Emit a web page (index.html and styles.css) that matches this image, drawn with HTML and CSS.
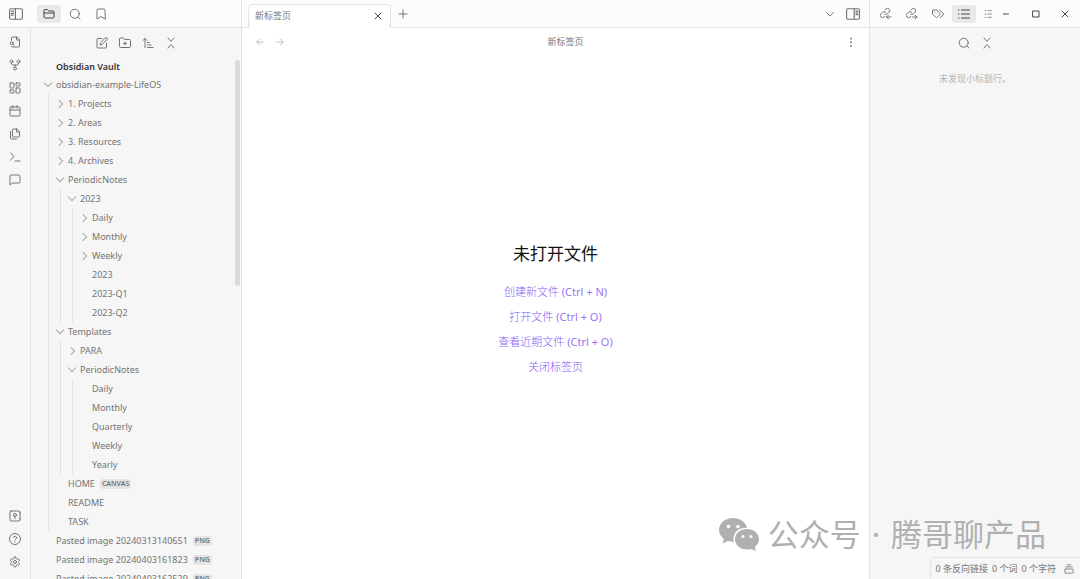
FILE: index.html
```html
<!DOCTYPE html>
<html lang="zh-CN">
<head>
  <meta charset="UTF-8" />
  <meta name="viewport" content="width=device-width, initial-scale=1.0"/>
  <title>新标签页 - Obsidian Vault</title>
  <link rel="stylesheet" href="styles.css">
</head>
<body>

<!-- Icons -->
<svg class="sprite" aria-hidden="true">
  <symbol id="i-side-left" viewBox="0 0 24 24"><rect x="1" y="3" width="22" height="18" rx="2"/><path d="M11 3v18M4 7h4M4 11h4M4 14h3"/></symbol>
  <symbol id="i-side-right" viewBox="0 0 24 24"><rect x="1" y="3" width="22" height="18" rx="2"/><path d="M14 3v18M17 7h3M17 10h3M17 13h3"/></symbol>
  <symbol id="i-folder" viewBox="0 0 24 24"><path d="M20 20a2 2 0 0 0 2-2V8a2 2 0 0 0-2-2h-7.9a2 2 0 0 1-1.7-.9l-.8-1.2A2 2 0 0 0 7.9 3H4a2 2 0 0 0-2 2v13a2 2 0 0 0 2 2ZM2 10h20"/></symbol>
  <symbol id="i-search" viewBox="0 0 24 24"><circle cx="11.5" cy="11.5" r="9"/><path d="m22 22-4-4"/></symbol>
  <symbol id="i-bookmark" viewBox="0 0 24 24"><path d="m20 22-8-5-8 5V4a2 2 0 0 1 2-2h12a2 2 0 0 1 2 2z"/></symbol>
  <symbol id="i-file-search" viewBox="0 0 24 24"><path d="M5 21c.3.6 1 1 1.700 1H19a2 2 0 0 0 2-2V7l-5-5H7a2 2 0 0 0-2 2v4M15 2v6h6M10 19l-2-2"/><circle cx="5.500" cy="14.500" r="3"/></symbol>
  <symbol id="i-fork" viewBox="0 0 24 24"><circle cx="12" cy="19" r="3"/><circle cx="5" cy="5" r="3"/><circle cx="19" cy="5" r="3"/><path d="M19 8v1c0 1.500-1 3-3 3H8c-2 0-3-1.500-3-3V8M12 12v4"/></symbol>
  <symbol id="i-dashboard" viewBox="0 0 24 24"><rect x="2" y="2" width="8" height="10" rx="1"/><rect x="14" y="2" width="8" height="6" rx="1"/><rect x="14" y="12" width="8" height="10" rx="1"/><rect x="2" y="16" width="8" height="6" rx="1"/></symbol>
  <symbol id="i-calendar" viewBox="0 0 24 24"><rect x="2" y="4" width="20" height="18" rx="2"/><path d="M16 1v5M8 1v5M2 10h20"/></symbol>
  <symbol id="i-files" viewBox="0 0 24 24"><path d="M15.500 2H9a2 2 0 0 0-2 2v12a2 2 0 0 0 2 2h10a2 2 0 0 0 2-2V7.500zM3 7v13a2 2 0 0 0 2 2h10M15 2v6h6"/></symbol>
  <symbol id="i-terminal" viewBox="0 0 24 24"><path d="m3 18 7-7-7-7M12 20h10"/></symbol>
  <symbol id="i-message" viewBox="0 0 24 24"><path d="M22 16a2 2 0 0 1-2 2H7l-5 4V4a2 2 0 0 1 2-2h16a2 2 0 0 1 2 2z"/></symbol>
  <symbol id="i-vault" viewBox="0 0 24 24"><rect x="2" y="2" width="20" height="20" rx="2"/><circle cx="12" cy="10" r="3"/><path d="M12 13v4M22 6h1M22 18h1"/></symbol>
  <symbol id="i-help" viewBox="0 0 24 24"><circle cx="12" cy="12" r="11"/><path d="M9 9a3 3 0 0 1 6 1c0 2-3 2.500-3 4M12 17.500v.5"/></symbol>
  <symbol id="i-gear" viewBox="0 0 24 24"><path d="M12.220 2h-.44a2 2 0 0 0-2 2v.18a2 2 0 0 1-1 1.730l-.43.25a2 2 0 0 1-2 0l-.15-.08a2 2 0 0 0-2.730.73l-.22.38a2 2 0 0 0 .73 2.730l.15.1a2 2 0 0 1 1 1.720v.51a2 2 0 0 1-1 1.740l-.15.09a2 2 0 0 0-.73 2.730l.22.38a2 2 0 0 0 2.730.73l.15-.08a2 2 0 0 1 2 0l.43.25a2 2 0 0 1 1 1.730V20a2 2 0 0 0 2 2h.44a2 2 0 0 0 2-2v-.18a2 2 0 0 1 1-1.730l.43-.25a2 2 0 0 1 2 0l.15.08a2 2 0 0 0 2.730-.73l.22-.39a2 2 0 0 0-.73-2.730l-.15-.08a2 2 0 0 1-1-1.740v-.5a2 2 0 0 1 1-1.740l.15-.09a2 2 0 0 0 .73-2.730l-.22-.38a2 2 0 0 0-2.730-.73l-.15.08a2 2 0 0 1-2 0l-.43-.25a2 2 0 0 1-1-1.730V4a2 2 0 0 0-2-2z"/><circle cx="12" cy="12" r="3"/></symbol>
  <symbol id="i-edit" viewBox="0 0 24 24"><path d="M12 3H4a2 2 0 0 0-2 2v15a2 2 0 0 0 2 2h15a2 2 0 0 0 2-2v-8M18.500 2a2.100 2.100 0 0 1 3.500 3.500L12 15l-4 1 1-4Z"/></symbol>
  <symbol id="i-folder-plus" viewBox="0 0 24 24"><path d="M21 21a2 2 0 0 0 2-2V7a2 2 0 0 0-2-2h-9L9.600 2.900A2 2 0 0 0 8 2H3a2 2 0 0 0-2 2v15a2 2 0 0 0 2 2ZM12 10v6M9 13h6"/></symbol>
  <symbol id="i-sort" viewBox="0 0 24 24"><path d="m2 7 4-4 4 4M6 3v18M11 11h4M11 16h7M11 21h11"/></symbol>
  <symbol id="i-collapse" viewBox="0 0 24 24"><path d="m6 22 6-7 6 7M6 2l6 7 6-7"/></symbol>
  <symbol id="i-link-in" viewBox="0 0 24 24"><path d="M8 11a4.500 4.500 0 0 0 7 .5l3-3A4.500 4.500 0 0 0 11.700 2L10 3.700M12 9a4.500 4.500 0 0 0-7-.5l-3 3A4.500 4.500 0 0 0 8.300 18l1.200-1.200M22 18h-9M17 14l-4 4 4 4"/></symbol>
  <symbol id="i-link-out" viewBox="0 0 24 24"><path d="M8 11a4.500 4.500 0 0 0 7 .5l3-3A4.500 4.500 0 0 0 11.700 2L10 3.700M12 9a4.500 4.500 0 0 0-7-.5l-3 3A4.500 4.500 0 0 0 8.300 18l1.200-1.200M13 18h9M18 14l4 4-4 4"/></symbol>
  <symbol id="i-tags" viewBox="0 0 24 24"><path d="M9 4H1v8l6.300 6.300c1 1 2.500 1 3.400 0l4.600-4.600c1-1 1-2.500 0-3.400ZM5.500 8.500v.1M15 4l7.300 6.300a2.400 2.400 0 0 1 0 3.400L17 19"/></symbol>
  <symbol id="i-list" viewBox="0 0 24 24"><path d="M7 4h16M7 12h16M7 20h16M1 4h1M1 12h1M1 20h1"/></symbol>
  <symbol id="i-outline" viewBox="0 0 24 24"><path d="M12 4h8M12 12h8M12 20h8M5 4h2M5 12h2M5 20h2"/></symbol>
  <symbol id="i-chevron-down" viewBox="0 0 24 24"><path d="m5 9 7 7 7-7"/></symbol>
  <symbol id="i-close" viewBox="0 0 24 24"><path d="M6 6l12 12M18 6 6 18"/></symbol>
  <symbol id="i-plus" viewBox="0 0 24 24"><path d="M12 4v16M4 12h16"/></symbol>
  <symbol id="i-back" viewBox="0 0 24 24"><path d="M20 12H4M11 5l-7 7 7 7"/></symbol>
  <symbol id="i-forward" viewBox="0 0 24 24"><path d="M4 12h16M13 5l7 7-7 7"/></symbol>
  <symbol id="i-more" viewBox="0 0 24 24"><path d="M12 3v1M12 12v1M12 21v1"/></symbol>
  <symbol id="i-min" viewBox="0 0 24 24"><path d="M7 12h10"/></symbol>
  <symbol id="i-max" viewBox="0 0 24 24"><rect x="6" y="6" width="12" height="12"/></symbol>
  <symbol id="i-stack" viewBox="0 0 24 24"><path d="M8 2h8M4 7h16"/><rect x="2" y="12" width="20" height="10" rx="2"/></symbol>
  <symbol id="i-wechat" viewBox="0 0 42 34">
    <path d="M15 1C7 1 1 6.500 1 13c0 3.500 2 6.500 5 9l-1.500 4.500L10 24c2 .6 4 .9 6 .8-2.500-8 4-14.300 13-14C27.500 5 22 1 15 1Z"/>
    <path d="M29 12c-7 0-12 4.700-12 10.300S22 32.500 29 32.500c1.500 0 3-.2 4.300-.6L38 34l-1.200-4c2.700-2 4.200-4.700 4.200-7.700C41 16.700 36 12 29 12Z"/>
    <g class="eyes"><circle cx="10.500" cy="9.500" r="1.800"/><circle cx="20" cy="9.500" r="1.800"/><circle cx="25" cy="19.500" r="1.500"/><circle cx="33" cy="19.500" r="1.500"/></g>
  </symbol>
</svg>

<div class="app">

  <!-- Left sidebar -->
  <div class="left">
    <div class="titlebar">
      <button class="toggle" aria-label="折叠侧边栏"><svg class="icon wide"><use href="#i-side-left"/></svg></button>
      <button class="tab-icon active" aria-label="文件列表"><svg class="icon"><use href="#i-folder"/></svg></button>
      <button class="tab-icon" aria-label="搜索"><svg class="icon"><use href="#i-search"/></svg></button>
      <button class="tab-icon" aria-label="书签"><svg class="icon"><use href="#i-bookmark"/></svg></button>
    </div>
    <div class="left-body">
      <nav class="ribbon">
        <button aria-label="快速切换"><svg class="icon"><use href="#i-file-search"/></svg></button>
        <button aria-label="关系图谱"><svg class="icon"><use href="#i-fork"/></svg></button>
        <button aria-label="新建白板"><svg class="icon"><use href="#i-dashboard"/></svg></button>
        <button aria-label="日记"><svg class="icon"><use href="#i-calendar"/></svg></button>
        <button aria-label="插入模板"><svg class="icon"><use href="#i-files"/></svg></button>
        <button aria-label="命令面板"><svg class="icon"><use href="#i-terminal"/></svg></button>
        <button aria-label="消息"><svg class="icon"><use href="#i-message"/></svg></button>
        <div class="spacer"></div>
        <button aria-label="打开其他仓库"><svg class="icon"><use href="#i-vault"/></svg></button>
        <button aria-label="帮助"><svg class="icon"><use href="#i-help"/></svg></button>
        <button aria-label="设置"><svg class="icon"><use href="#i-gear"/></svg></button>
      </nav>

      <div class="explorer">
        <div class="pane-actions">
          <button aria-label="新建笔记"><svg class="icon"><use href="#i-edit"/></svg></button>
          <button aria-label="新建文件夹"><svg class="icon"><use href="#i-folder-plus"/></svg></button>
          <button aria-label="排序"><svg class="icon"><use href="#i-sort"/></svg></button>
          <button aria-label="全部折叠"><svg class="icon"><use href="#i-collapse"/></svg></button>
        </div>
        <div class="files">
          <div class="vault-name">Obsidian Vault</div>
          <ul class="tree">
            <li><button class="row folder open">obsidian-example-LifeOS</button>
              <ul>
                <li><button class="row folder">1. Projects</button></li>
                <li><button class="row folder">2. Areas</button></li>
                <li><button class="row folder">3. Resources</button></li>
                <li><button class="row folder">4. Archives</button></li>
                <li><button class="row folder open">PeriodicNotes</button>
                  <ul>
                    <li><button class="row folder open">2023</button>
                      <ul>
                        <li><button class="row folder">Daily</button></li>
                        <li><button class="row folder">Monthly</button></li>
                        <li><button class="row folder">Weekly</button></li>
                        <li><button class="row">2023</button></li>
                        <li><button class="row">2023-Q1</button></li>
                        <li><button class="row">2023-Q2</button></li>
                      </ul>
                    </li>
                  </ul>
                </li>
                <li><button class="row folder open">Templates</button>
                  <ul>
                    <li><button class="row folder">PARA</button></li>
                    <li><button class="row folder open">PeriodicNotes</button>
                      <ul>
                        <li><button class="row">Daily</button></li>
                        <li><button class="row">Monthly</button></li>
                        <li><button class="row">Quarterly</button></li>
                        <li><button class="row">Weekly</button></li>
                        <li><button class="row">Yearly</button></li>
                      </ul>
                    </li>
                  </ul>
                </li>
                <li><button class="row">HOME <span class="tag">CANVAS</span></button></li>
                <li><button class="row">README</button></li>
                <li><button class="row">TASK</button></li>
              </ul>
            </li>
            <li><button class="row">Pasted image 20240313140651 <span class="tag">PNG</span></button></li>
            <li><button class="row">Pasted image 20240403161823 <span class="tag">PNG</span></button></li>
            <li><button class="row">Pasted image 20240403162529 <span class="tag">PNG</span></button></li>
          </ul>
          <div class="scroll-thumb"></div>
        </div>
      </div>
    </div>
  </div>

  <!-- Editor -->
  <main class="center">
    <div class="titlebar tabs">
      <div class="tab">
        <span>新标签页</span>
        <button aria-label="关闭"><svg class="icon"><use href="#i-close"/></svg></button>
      </div>
      <button class="new-tab" aria-label="新建标签页"><svg class="icon"><use href="#i-plus"/></svg></button>
      <div class="spacer"></div>
      <button class="tab-tool" aria-label="标签页列表"><svg class="icon"><use href="#i-chevron-down"/></svg></button>
      <button class="tab-tool" aria-label="折叠右侧栏"><svg class="icon wide"><use href="#i-side-right"/></svg></button>
    </div>
    <div class="view-header">
      <button class="faint" aria-label="后退"><svg class="icon small"><use href="#i-back"/></svg></button>
      <button class="faint" aria-label="前进"><svg class="icon small"><use href="#i-forward"/></svg></button>
      <div class="view-title">新标签页</div>
      <button aria-label="更多选项"><svg class="icon small bold"><use href="#i-more"/></svg></button>
    </div>
    <div class="empty">
      <h1>未打开文件</h1>
      <a href="#">创建新文件 <span>(Ctrl + N)</span></a>
      <a href="#">打开文件 <span>(Ctrl + O)</span></a>
      <a href="#">查看近期文件 <span>(Ctrl + O)</span></a>
      <a href="#">关闭标签页</a>
    </div>
  </main>

  <!-- Right sidebar -->
  <div class="right">
    <div class="titlebar">
      <button class="tab-icon" aria-label="反向链接"><svg class="icon"><use href="#i-link-in"/></svg></button>
      <button class="tab-icon" aria-label="出链"><svg class="icon"><use href="#i-link-out"/></svg></button>
      <button class="tab-icon" aria-label="标签"><svg class="icon"><use href="#i-tags"/></svg></button>
      <button class="tab-icon active" aria-label="大纲"><svg class="icon"><use href="#i-list"/></svg></button>
      <button class="tab-icon clipped" aria-label="所有属性"><svg class="icon small"><use href="#i-outline"/></svg></button>
      <div class="window-buttons">
        <button aria-label="最小化"><svg class="icon"><use href="#i-min"/></svg></button>
        <button aria-label="最大化"><svg class="icon"><use href="#i-max"/></svg></button>
        <button aria-label="关闭窗口"><svg class="icon"><use href="#i-close"/></svg></button>
      </div>
    </div>
    <div class="pane-actions">
      <button aria-label="搜索大纲"><svg class="icon"><use href="#i-search"/></svg></button>
      <button aria-label="全部折叠"><svg class="icon"><use href="#i-collapse"/></svg></button>
    </div>
    <p class="no-headings">未发现小标题行。</p>
  </div>

</div>

<div class="watermark">
  <svg><use href="#i-wechat"/></svg>
  <span>公众号</span><span>·</span><span>腾哥聊产品</span>
</div>

<footer class="status-bar">
  <span>0 条反向链接</span>
  <span>0 个词</span>
  <span>0 个字符</span>
  <svg class="icon small"><use href="#i-stack"/></svg>
</footer>

</body>
</html>
```

FILE: styles.css
```css
* {
  box-sizing: border-box;
}

body {
  margin: 0;
  font-family: "Noto Sans", "Noto Sans CJK SC", sans-serif;
  font-size: 9px;
  color: #747474;
  background: #fff;
  overflow: hidden;
}

button {
  display: flex;
  align-items: center;
  justify-content: center;
  padding: 0;
  border: none;
  background: none;
  font: inherit;
  color: inherit;
  cursor: pointer;
}

ul {
  list-style: none;
  margin: 0;
  padding: 0;
}

.sprite {
  display: none;
}

.icon {
  width: 12px;
  height: 12px;
  flex: none;
  fill: none;
  stroke: currentColor;
  stroke-width: 2;
  stroke-linecap: round;
  stroke-linejoin: round;
}

.icon.wide {
  width: 14px;
  height: 14px;
}

.icon.small {
  width: 10px;
  height: 10px;
}

.icon.bold {
  stroke-width: 4;
}

.spacer {
  flex: 1;
}

.app {
  display: flex;
  height: 100vh;
}

.titlebar {
  display: flex;
  align-items: center;
  flex: none;
  height: 28px;
  background: #fcfcfc;
  border-bottom: 1px solid #e4e4e4;
}

.tab-icon {
  width: 24px;
  height: 18px;
  margin-right: 2px;
  border-radius: 3px;
}

.tab-icon.active {
  background: #e9e9e9;
  color: #444;
}

/* left sidebar */
.left {
  display: flex;
  flex-direction: column;
  flex: 0 0 242px;
  background: #f6f6f6;
  border-right: 1px solid #e4e4e4;
}

.toggle {
  width: 31px;
  margin-right: 6px;
}

.left-body {
  display: flex;
  flex: 1;
  min-height: 0;
}

.ribbon {
  display: flex;
  flex-direction: column;
  gap: 1px;
  flex: 0 0 31px;
  padding: 3px 0 6px;
  border-right: 1px solid #e4e4e4;
}

.ribbon button {
  height: 22px;
}

.explorer {
  display: flex;
  flex-direction: column;
  flex: 1;
  min-width: 0;
}

.pane-actions {
  display: flex;
  justify-content: center;
  gap: 1px;
  flex: none;
  height: 30px;
}

.pane-actions button {
  width: 22px;
}

.files {
  position: relative;
  flex: 1;
  min-height: 0;
  padding-left: 13px;
  overflow: hidden;
}

.vault-name {
  padding-left: 12px;
  line-height: 17px;
  font-weight: 600;
  color: #333;
}

.tree ul {
  margin-left: 4px;
  padding-left: 7px;
  border-left: 1px solid #e2e2e2;
}

.row {
  position: relative;
  justify-content: flex-start;
  width: 100%;
  height: 19px;
  padding-left: 12px;
  white-space: nowrap;
}

.folder::before {
  content: "";
  position: absolute;
  left: 0;
  top: 7px;
  width: 5px;
  height: 5px;
  border: solid #aaa;
  border-width: 1px 1px 0 0;
  transform: rotate(45deg);
}

.folder.open::before {
  left: 1px;
  top: 5px;
  transform: rotate(135deg);
}

.tag {
  margin-left: 5px;
  padding: 0 2px;
  border-radius: 3px;
  background: #e4e4e4;
  font-size: 7px;
  line-height: 10px;
  font-weight: 600;
}

.scroll-thumb {
  position: absolute;
  top: 2px;
  right: 1px;
  width: 5px;
  height: 226px;
  border-radius: 3px;
  background: #dadada;
}

/* editor */
.center {
  display: flex;
  flex-direction: column;
  flex: 1;
  min-width: 0;
}

.tabs {
  align-items: stretch;
  padding: 0 5px 0 6px;
}

.tab {
  position: relative;
  display: flex;
  align-items: center;
  justify-content: space-between;
  flex: 0 1 143px;
  margin: 4px 0 -1px;
  padding: 0 6px 2px;
  border: 1px solid #e4e4e4;
  border-bottom: none;
  border-radius: 5px 5px 0 0;
  background: #fff;
}

/* rounded feet of the tab */
.tab::before,
.tab::after {
  content: "";
  position: absolute;
  bottom: 0;
  width: 4px;
  height: 4px;
  border-bottom: 1px solid #e4e4e4;
}

.tab::before {
  left: -4px;
  border-right: 1px solid #e4e4e4;
  border-radius: 0 0 4px 0;
}

.tab::after {
  right: -4px;
  border-left: 1px solid #e4e4e4;
  border-radius: 0 0 0 4px;
}

.tab .icon {
  color: #444;
}

.new-tab {
  width: 24px;
}

.tab-tool {
  width: 23px;
}

.view-header {
  display: flex;
  align-items: center;
  height: 27px;
  padding: 0 8px;
}

.view-header button {
  width: 20px;
}

.view-header .faint {
  color: #b5b5b5;
}

.view-title {
  flex: 1;
  text-align: center;
}

.empty {
  display: flex;
  flex-direction: column;
  align-items: center;
  justify-content: center;
  flex: 1;
  padding-bottom: 14px;
}

.empty h1 {
  margin: 0 0 13px;
  font-size: 17px;
  line-height: 25px;
  font-weight: 400;
  color: #111;
}

.empty a {
  font-size: 11px;
  line-height: 25px;
  font-weight: 300;
  color: #8a5cf5;
  text-decoration: none;
}

.empty a span {
  font-weight: 400;
  color: #9a73f6;
}

/* right sidebar */
.right {
  display: flex;
  flex-direction: column;
  flex: 0 0 211px;
  background: #f6f6f6;
  border-left: 1px solid #e4e4e4;
}

.right .titlebar {
  padding-left: 4px;
}

.right .clipped {
  width: 20px;
  margin: 0;
}

.window-buttons {
  display: flex;
  justify-content: space-between;
  flex: 1;
  padding: 0 9px 0 2px;
  color: #444;
}

.no-headings {
  margin: 14px 0;
  text-align: center;
  color: #b4b4b4;
}

/* overlays */
.watermark {
  position: absolute;
  right: 34px;
  bottom: 22px;
  display: flex;
  align-items: center;
  gap: 11px;
  font-size: 31px;
  line-height: 46px;
  color: #b0b0b0;
}

.watermark svg {
  width: 42px;
  height: 34px;
  margin-right: -3px;
  fill: currentColor;
}

.eyes {
  fill: #fff;
}

.status-bar {
  position: absolute;
  right: 0;
  bottom: 0;
  display: flex;
  align-items: center;
  gap: 4px;
  height: 22px;
  padding: 0 6px 0 5px;
  border: solid #e4e4e4;
  border-width: 1px 0 0 1px;
  border-radius: 5px 0 0 0;
  background: #f6f6f6;
}

.status-bar .icon {
  margin-left: 4px;
}
```
